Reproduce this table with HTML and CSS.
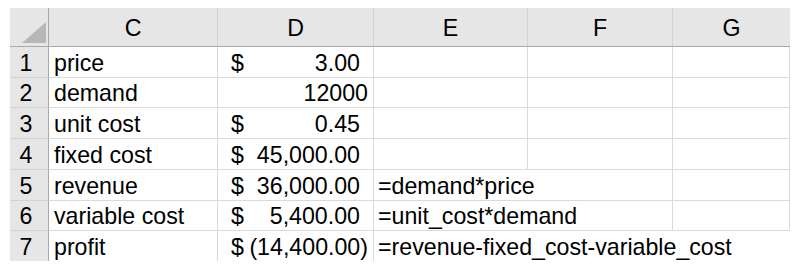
FILE: index.html
```html
<!DOCTYPE html>
<html lang="en">
<head>
  <meta charset="UTF-8">
  <title>Sheet</title>
  <link rel="stylesheet" href="styles.css">
</head>
<body>
  <div class="sheet">
    <div class="corner">
      <svg width="24" height="21" viewBox="0 0 24 21"><polygon points="24,0 24,21 0,21" fill="#b7b7b7"/></svg>
    </div>
    <div class="col-head">C</div>
    <div class="col-head">D</div>
    <div class="col-head">E</div>
    <div class="col-head">F</div>
    <div class="col-head last">G</div>

    <div class="row-head">1</div>
    <div class="cell">price</div>
    <div class="cell money"><span>$</span><span class="pos">3.00</span></div>
    <div class="cell"></div>
    <div class="cell"></div>
    <div class="cell"></div>

    <div class="row-head">2</div>
    <div class="cell">demand</div>
    <div class="cell num">12000</div>
    <div class="cell"></div>
    <div class="cell"></div>
    <div class="cell"></div>

    <div class="row-head">3</div>
    <div class="cell">unit cost</div>
    <div class="cell money"><span>$</span><span class="pos">0.45</span></div>
    <div class="cell"></div>
    <div class="cell"></div>
    <div class="cell"></div>

    <div class="row-head">4</div>
    <div class="cell">fixed cost</div>
    <div class="cell money"><span>$</span><span class="pos">45,000.00</span></div>
    <div class="cell"></div>
    <div class="cell"></div>
    <div class="cell"></div>

    <div class="row-head">5</div>
    <div class="cell">revenue</div>
    <div class="cell money"><span>$</span><span class="pos">36,000.00</span></div>
    <div class="cell formula span2">=demand*price</div>
    <div class="cell"></div>

    <div class="row-head">6</div>
    <div class="cell">variable cost</div>
    <div class="cell money"><span>$</span><span class="pos">5,400.00</span></div>
    <div class="cell formula span2">=unit_cost*demand</div>
    <div class="cell"></div>

    <div class="row-head">7</div>
    <div class="cell">profit</div>
    <div class="cell money"><span>$</span><span class="neg">(14,400.00)</span></div>
    <div class="cell formula span3">=revenue-fixed_cost-variable_cost</div>
  </div>
</body>
</html>
```

FILE: styles.css
```css
:root {
  --head: #e6e6e6;
  --grid: #dadada;
  --head-line: #a8a8a8;
  --text: #000;
}

body {
  margin: 0;
  background: #fff;
  font-family: "Liberation Sans", Arial, sans-serif;
  font-size: 23.2px;
  color: var(--text);
}

.sheet {
  display: grid;
  grid-template-columns: 39px 169px 156px 154px 145px 117px;
  grid-template-rows: 39px 31px 30px 31px 31px 31px 30px 30px;
  margin: 8px 0 0 10px;
  width: 780px;
}

.corner {
  background: var(--head);
  display: flex;
  justify-content: flex-end;
  align-items: flex-end;
  padding: 0 2px 3px 0;
  border-right: 1px solid var(--head-line);
  border-bottom: 1px solid var(--head-line);
}

.col-head {
  background: var(--head);
  display: flex;
  align-items: center;
  justify-content: center;
  padding-top: 2px;
  border-right: 1px solid #d2d2d2;
  border-bottom: 1px solid var(--head-line);
}

.col-head.last {
  border-right: none;
}

.row-head {
  background: var(--head);
  display: flex;
  align-items: center;
  justify-content: center;
  padding: 2px 6px 0 0;
  border-right: 1px solid var(--head-line);
  border-bottom: 1px solid #d2d2d2;
}

.cell {
  display: flex;
  align-items: center;
  padding: 2px 5px 0;
  white-space: nowrap;
  border-right: 1px solid var(--grid);
  border-bottom: 1px solid var(--grid);
}

.cell.num {
  justify-content: flex-end;
  padding-right: 5px;
}

.cell.money {
  justify-content: space-between;
  padding: 2px 5px 0 13px;
}

.money .pos {
  padding-right: 8px;
}

.cell.formula {
  padding-left: 4px;
}

.span2 {
  grid-column: span 2;
}

.span3 {
  grid-column: span 3;
  border-right: none;
}

.sheet > :nth-last-child(-n+4) {
  border-bottom: none;
}
```
